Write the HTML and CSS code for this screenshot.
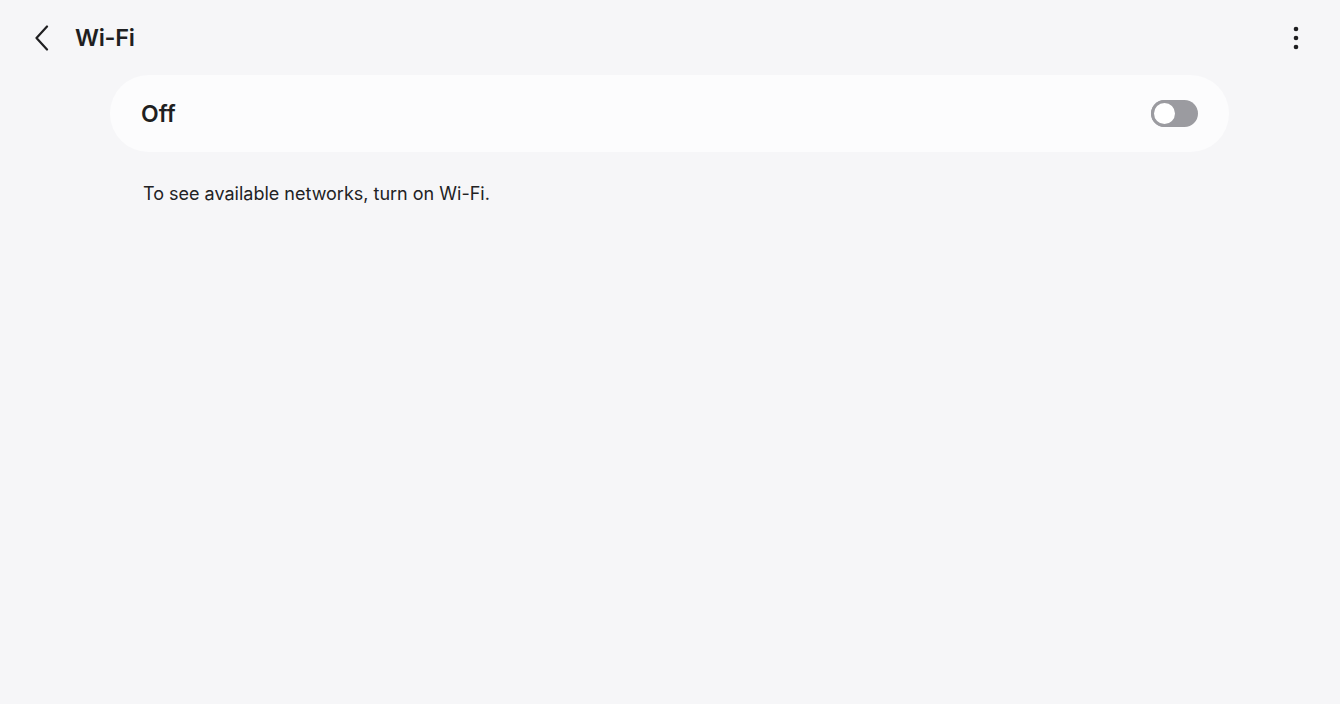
FILE: index.html
```html
<!DOCTYPE html>
<html>
<head>
<meta charset="utf-8">
<link rel="stylesheet" href="styles.css">
</head>
<body>
<div class="page">
  <header class="topbar">
    <button class="back" aria-label="Back">
      <svg width="16" height="26" viewBox="0 0 16 26"><path d="M13 1.5 L2.5 13 L13 24.5" fill="none" stroke="#1f1f21" stroke-width="2.2" stroke-linecap="round" stroke-linejoin="round"/></svg>
    </button>
    <h1 class="title">Wi-Fi</h1>
    <div class="spacer"></div>
    <button class="more" aria-label="More options">
      <svg width="6" height="24" viewBox="0 0 6 24"><circle cx="3" cy="3" r="2.3" fill="#1f1f21"/><circle cx="3" cy="12" r="2.3" fill="#1f1f21"/><circle cx="3" cy="21" r="2.3" fill="#1f1f21"/></svg>
    </button>
  </header>
  <main class="content">
    <div class="card">
      <span class="card-label">Off</span>
      <span class="switch"><span class="knob"></span></span>
    </div>
    <p class="hint">To see available networks, turn on Wi-Fi.</p>
  </main>
</div>
</body>
</html>
```
FILE: styles.css
```css
html, body {
  margin: 0;
  padding: 0;
  background: #f6f6f8;
  font-family: Inter, Roboto, "Noto Sans", sans-serif;
  color: #1f1f21;
}
.page {
  width: 1340px;
  height: 704px;
  display: flex;
  flex-direction: column;
}
.topbar {
  height: 75px;
  display: flex;
  align-items: center;
  padding: 0 32px 0 32px;
  box-sizing: border-box;
}
.back, .more {
  background: none;
  border: 0;
  padding: 0;
  display: flex;
  align-items: center;
  justify-content: center;
}
.back {
  width: 20px;
  height: 30px;
  margin-top: 1px;
}
.title {
  margin: 0 0 0 23px;
  font-size: 23.5px;
  font-weight: 600;
  letter-spacing: -0.3px;
}
.spacer { flex: 1; }
.more {
  width: 20px;
  height: 30px;
  margin-right: 2px;
  margin-top: 1px;
}
.content {
  padding: 0 111px 0 110px;
}
.card {
  height: 77px;
  border-radius: 39px;
  background: #fcfcfd;
  display: flex;
  align-items: center;
  justify-content: space-between;
  padding: 0 31px 0 31px;
}
.card-label {
  font-size: 23px;
  font-weight: 600;
}
.switch {
  width: 47px;
  height: 27px;
  border-radius: 14px;
  background: #9b9ba0;
  position: relative;
  display: block;
}
.knob {
  position: absolute;
  left: 0;
  top: 0;
  width: 21px;
  height: 21px;
  border: 3px solid #9b9ba0;
  background: #ffffff;
  border-radius: 50%;
  box-sizing: content-box;
}
.hint {
  margin: 31px 0 0 33px;
  font-size: 18px;
  font-weight: 400;
  color: #222224;
}
```
